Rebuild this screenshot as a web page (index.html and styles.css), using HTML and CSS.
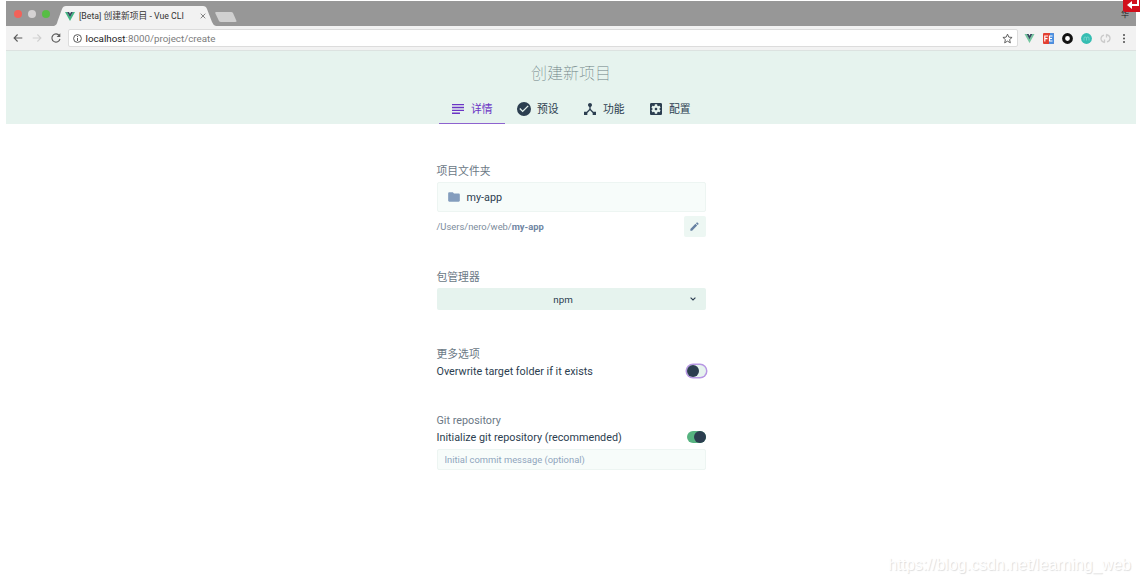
FILE: index.html
```
<!DOCTYPE html>
<html lang="zh-CN">
<head>
    <meta charset="UTF-8">
    <meta name="viewport" content="width=device-width, initial-scale=1.0">
    <title>[Beta] 创建新项目 - Vue CLI</title>
    <link rel="stylesheet" href="styles.css">
</head>
<body>
    <div class="window">
        <div class="tab-bar">
            <div class="lights">
                <span class="light red"></span>
                <span class="light grey"></span>
                <span class="light green"></span>
            </div>
            <div class="tab">
                <svg class="tab-shape" width="162" height="20" viewBox="0 0 162 20"><path d="M0 20C3 19 3 17 4 14L8 3Q9 0 12 0H149Q152 0 153 3L158 16Q159 19 162 20Z" fill="#f2f2f2"/></svg>
                <svg class="vue" width="10" height="9" viewBox="0 0 10 9"><path d="M0 0H2L5 5L8 0H10L5 9Z" fill="#41b883"/><path d="M2 0H4L5 1.8L6 0H8L5 5.2Z" fill="#35495e"/></svg>
                <span class="tab-title">[Beta] 创建新项目 - Vue CLI</span>
                <svg class="tab-close" width="6" height="6" viewBox="0 0 6 6"><path d="M.7 .7L5.3 5.3M5.3 .7L.7 5.3" stroke="#777" stroke-width=".9"/></svg>
            </div>
            <svg class="new-tab" width="22" height="10" viewBox="0 0 22 10"><path d="M1 0H16Q17.500 0 18 1L21.500 9Q22 10 20 10H6Q4.500 10 4 9L.3 1.200Q0 0 1 0Z" fill="#d0d0d0"/></svg>
            <span class="profile">华</span>
        </div>

        <div class="toolbar">
            <svg class="nav" width="12" height="12" viewBox="0 0 12 12"><path d="M10.300 6H2.200M5.600 2.500L2.100 6L5.600 9.500" fill="none" stroke="#5a5a5a" stroke-width="1.100"/></svg>
            <svg class="nav" width="12" height="12" viewBox="0 0 12 12"><path d="M1.700 6H9.800M6.400 2.500L9.900 6L6.400 9.500" fill="none" stroke="#cfcfcf" stroke-width="1.100"/></svg>
            <svg class="nav" width="12" height="12" viewBox="0 0 12 12"><path d="M9.300 3.500A4.100 4.100 0 1 0 10 7" fill="none" stroke="#5a5a5a" stroke-width="1.100"/><path d="M10.300 1.300V5H6.600Z" fill="#5a5a5a"/></svg>
            <div class="address">
                <svg width="9" height="9" viewBox="0 0 9 9"><circle cx="4.500" cy="4.500" r="3.900" fill="none" stroke="#5a5a5a"/><path d="M4.500 4V7M4.500 2V3.100" stroke="#5a5a5a"/></svg>
                <span class="url"><span class="host">localhost</span>:8000/project/create</span>
                <svg class="star" width="11" height="11" viewBox="0 0 24 24"><path d="M12 2.500L14.900 9L22 9.700L16.600 14.400L18.200 21.500L12 17.700L5.800 21.500L7.400 14.400L2 9.700L9.100 9Z" fill="none" stroke="#555" stroke-width="2"/></svg>
            </div>
            <div class="extensions">
                <svg width="11" height="11" viewBox="0 0 11 11"><path d="M.5 1H2.600L5.500 6L8.400 1H10.500L5.500 10Z" fill="#74c7a0"/><path d="M2.600 1H4.600L5.500 2.700L6.400 1H8.400L5.500 6.200Z" fill="#35495e"/></svg>
                <svg width="11" height="11" viewBox="0 0 11 11"><rect width="11" height="11" rx="1" fill="#e33f31"/><path d="M7 0H10Q11 0 11 1V10Q11 11 10 11H6Z" fill="#4b8fe0"/><path d="M1.800 8.500V3H5M2 5.700H4.500M9.500 3H6.500V8H9.500M6.500 5.500H9" fill="none" stroke="#fff" stroke-width="1.200"/></svg>
                <svg width="11" height="11" viewBox="0 0 11 11"><circle cx="5.500" cy="5.500" r="3.900" fill="#fff" stroke="#111" stroke-width="3"/></svg>
                <svg width="11" height="11" viewBox="0 0 11 11"><circle cx="5.500" cy="5.500" r="5.400" fill="#35bdb2"/><path d="M3 7.500V5Q3 4 4.200 4Q5.500 4 5.500 5V7.500M5.500 5Q5.500 4 6.800 4Q8 4 8 5V7.500" fill="none" stroke="#80d8d0" stroke-width=".8"/></svg>
                <svg width="11" height="11" viewBox="0 0 11 11"><path d="M4.800 9.500Q.8 8.500 1 5.500Q1.200 2.700 4 2.200M6.200 1.500Q10.200 2.500 10 5.500Q9.800 8.300 7 8.800M4.500 6.500V9.500M6.500 4.500V1.500" fill="none" stroke="#cacaca" stroke-width="1.300"/></svg>
                <svg class="more" width="11" height="11" viewBox="0 0 11 11"><g fill="#4c4c4c"><circle cx="5" cy="2" r="1"/><circle cx="5" cy="5.500" r="1"/><circle cx="5" cy="9" r="1"/></g></svg>
            </div>
        </div>

        <div class="header">
            <h1>创建新项目</h1>
            <div class="steps">
                <div class="step active">
                    <svg width="16" height="16" viewBox="0 0 24 24"><path d="M3 4.500H21V6.500H3ZM3 8.800H21V10.800H3ZM3 13.100H21V15.100H3ZM3 17.400H15V19.400H3Z"/></svg>
                    <span>详情</span>
                </div>
                <div class="step">
                    <svg width="16" height="16" viewBox="0 0 24 24"><path d="M12 1.500a10.500 10.500 0 1 0 0 21a10.500 10.500 0 0 0 0-21zM10 17l-5-5 1.410-1.410L10 14.170l7.590-7.590L19 8z"/></svg>
                    <span>预设</span>
                </div>
                <div class="step">
                    <svg width="16" height="16" viewBox="0 0 24 24"><path d="M17 16l-4-4V8.820C14.160 8.400 15 7.300 15 6c0-1.660-1.340-3-3-3S9 4.340 9 6c0 1.300.84 2.400 2 2.820V12l-4 4H3v5h5v-3.050l4-4.200 4 4.200V21h5v-5h-4z"/></svg>
                    <span>功能</span>
                </div>
                <div class="step">
                    <svg width="16" height="16" viewBox="0 0 24 24"><path d="M12 10c-1.100 0-2 .9-2 2s.9 2 2 2 2-.9 2-2-.9-2-2-2zm7-7H5c-1.110 0-2 .9-2 2v14c0 1.100.89 2 2 2h14c1.110 0 2-.9 2-2V5c0-1.100-.89-2-2-2zm-1.750 9c0 .23-.02.46-.05.68l1.480 1.160c.13.110.17.3.08.45l-1.400 2.420c-.09.150-.27.210-.43.150l-1.740-.7c-.36.280-.76.510-1.180.69l-.26 1.850c-.03.170-.18.300-.35.300h-2.800c-.17 0-.32-.13-.35-.29l-.26-1.850c-.43-.18-.82-.41-1.180-.69l-1.740.7c-.16.060-.34 0-.43-.15l-1.400-2.420c-.09-.15-.05-.34.08-.45l1.480-1.160c-.03-.23-.05-.46-.05-.69 0-.23.02-.46.05-.68l-1.480-1.160c-.13-.11-.17-.3-.08-.45l1.400-2.420c.09-.15.27-.21.430-.15l1.740.7c.36-.28.76-.51 1.180-.69l.26-1.850c.03-.17.18-.3.350-.3h2.800c.17 0 .32.130.350.290l.26 1.850c.43.180.82.410 1.180.690l1.740-.7c.16-.06.34 0 .43.150l1.400 2.420c.09.150.05.340-.08.450l-1.480 1.160c.03.230.05.460.05.690z"/></svg>
                    <span>配置</span>
                </div>
            </div>
        </div>

        <div class="form">
            <div class="group folder-group">
                <div class="label">项目文件夹</div>
                <div class="folder">
                    <svg width="14" height="14" viewBox="0 0 24 24"><path d="M10 4H4c-1.100 0-2 .9-2 2v12c0 1.100.9 2 2 2h16c1.100 0 2-.9 2-2V8c0-1.100-.9-2-2-2h-8l-2-2z"/></svg>
                    <span>my-app</span>
                </div>
                <div class="path-row">
                    <span class="path">/Users/nero/web/<b>my-app</b></span>
                    <button class="edit" type="button">
                        <svg width="11" height="11" viewBox="0 0 24 24"><path d="M3 17.250V21h3.750L17.810 9.940l-3.750-3.750L3 17.250zM20.710 7.040a1 1 0 0 0 0-1.410l-2.340-2.340a1 1 0 0 0-1.410 0l-1.830 1.830 3.750 3.750 1.830-1.830z"/></svg>
                    </button>
                </div>
            </div>

            <div class="group manager-group">
                <div class="label">包管理器</div>
                <div class="select">
                    <span>npm</span>
                    <svg width="6" height="4" viewBox="0 0 6 4"><path d="M.6 .6L3 2.900L5.400 .6" fill="none" stroke="#2c3e50" stroke-width="1.100"/></svg>
                </div>
            </div>

            <div class="group options-group">
                <div class="label">更多选项</div>
                <div class="switch-row">
                    <span>Overwrite target folder if it exists</span>
                    <span class="switch focused"></span>
                </div>
            </div>

            <div class="group git-group">
                <div class="label">Git repository</div>
                <div class="switch-row">
                    <span>Initialize git repository (recommended)</span>
                    <span class="switch on"></span>
                </div>
                <input class="commit" type="text" placeholder="Initial commit message (optional)">
            </div>
        </div>
    </div>

    <div class="corner">
        <svg width="17" height="12" viewBox="0 0 17 12"><path d="M15 0V5H7" fill="none" stroke="#fff" stroke-width="2"/><path d="M4 5L9 1V9Z" fill="#fff"/></svg>
    </div>
    <div class="watermark">https://blog.csdn.net/learning_web</div>
</body>
</html>
```
FILE: styles.css
```
* {
    box-sizing: border-box;
}

body {
    margin: 0;
    height: 583px;
    overflow: hidden;
    background: #fff;
    color: #2c3e50;
    font-family: Roboto, "Noto Sans CJK SC", sans-serif;
    font-size: 10.8px;
}

svg {
    display: block;
    flex-shrink: 0;
}

.window {
    margin: 1px 4px 0 6px;
}

/* browser chrome */
.tab-bar {
    display: flex;
    height: 25px;
    background: #979797;
}

.lights {
    display: flex;
    gap: 6px;
    padding: 9px 0 0 8px;
}

.light {
    width: 8px;
    height: 8px;
    border-radius: 50%;
}

.light.red {
    background: #f2625a;
}

.light.grey {
    background: #d5d2d3;
}

.light.green {
    background: #57bd45;
}

.tab {
    position: relative;
    display: flex;
    align-items: center;
    width: 162px;
    height: 20px;
    margin: 5px 0 0 4px;
    padding-left: 11px;
}

.tab-shape {
    position: absolute;
    left: 0;
    top: 0;
}

.vue,
.tab-title,
.tab-close {
    position: relative;
}

.tab-title {
    width: 116px;
    margin-left: 4px;
    color: #333;
    font-size: 8.75px;
    line-height: 20px;
    white-space: nowrap;
}

.tab-close {
    margin-left: 5px;
}

.new-tab {
    margin-top: 11px;
    margin-left: -1px;
}

.profile {
    margin: 8px 7px 0 auto;
    color: #222;
    font-size: 8px;
    line-height: 12px;
}

.toolbar {
    display: flex;
    align-items: center;
    height: 25px;
    padding: 0 6px;
    background: #f2f2f2;
    border-bottom: 1px solid #dce2e0;
}

.nav {
    margin-right: 7px;
}

.address {
    display: flex;
    align-items: center;
    width: 950px;
    height: 18px;
    margin-left: -1px;
    padding: 0 4px;
    background: #fff;
    border: 1px solid #dcdcdc;
    border-radius: 2px;
}

.url {
    margin-left: 3.5px;
    color: #7c7c7c;
    font-size: 9.8px;
}

.host {
    color: #222;
}

.star {
    margin-left: auto;
}

.extensions {
    display: flex;
    gap: 8px;
    margin-left: 6px;
}

/* project header */
.header {
    height: 73px;
    background: #e6f3ee;
}

.header h1 {
    margin: 0;
    padding-top: 9px;
    color: #6c7f82;
    font-size: 16px;
    font-weight: 100;
    line-height: 28px;
    text-align: center;
}

.steps {
    display: flex;
    justify-content: center;
    margin-top: 6px;
}

.step {
    display: flex;
    align-items: center;
    gap: 5px;
    width: 66px;
    height: 30px;
    padding-left: 11px;
    border-bottom: 1px solid transparent;
    white-space: nowrap;
}

.step span {
    padding-bottom: 1px;
}

.step svg {
    fill: #2c3e50;
}

.step.active {
    color: #6b35c5;
    border-bottom-color: #8d63cf;
}

.step.active svg {
    fill: #6b35c5;
}

/* details form */
.form {
    width: 269px;
    margin: 39px 0 0 430.5px;
}

.label {
    height: 18px;
    color: #6b7885;
    line-height: 18px;
}

.folder-group {
    height: 106px;
}

.folder {
    display: flex;
    align-items: center;
    gap: 6px;
    height: 30px;
    margin-top: 1px;
    padding-left: 9px;
    background: #f7fcfa;
    border: 1px solid #edf5f2;
    border-radius: 2px;
}

.folder svg {
    fill: #849dbd;
}

.path-row {
    display: flex;
    align-items: center;
    justify-content: space-between;
    margin-top: 4px;
    color: #7b8b9b;
    font-size: 9.4px;
}

.path b {
    color: #6f86a3;
}

.edit {
    display: flex;
    align-items: center;
    justify-content: center;
    width: 22px;
    height: 21px;
    padding: 0;
    background: #edf7f3;
    border: none;
    border-radius: 2px;
}

.edit svg {
    fill: #6681a2;
}

.manager-group {
    height: 77px;
}

.select {
    display: flex;
    align-items: center;
    height: 22px;
    margin-top: 1px;
    padding-right: 10px;
    background: #e6f3ee;
    border-radius: 2px;
    font-size: 9.8px;
}

.select span {
    flex: 1;
    text-align: center;
}

.options-group {
    height: 66px;
}

.switch-row {
    display: flex;
    align-items: center;
    justify-content: space-between;
    height: 16px;
    margin-top: -1px;
}

.switch {
    display: flex;
    width: 19px;
    height: 12px;
    border-radius: 6px;
    background: #e6f3ee;
}

.switch::before {
    content: "";
    width: 12px;
    height: 12px;
    border-radius: 50%;
    background: #2c3e50;
}

.switch.focused {
    box-shadow: 0 0 0 1.5px #b797e3;
}

.switch.on {
    justify-content: flex-end;
    background: #56b380;
}

.commit {
    display: block;
    width: 100%;
    height: 21px;
    margin-top: 4px;
    padding: 0 7px;
    background: #f7fcfa;
    border: 1px solid #edf5f2;
    border-radius: 2px;
    font-family: inherit;
    font-size: 9.4px;
}

.commit::placeholder {
    color: #8fa5bd;
}

/* overlays */
.corner {
    position: absolute;
    top: 0;
    right: 0;
    background: #d10f1b;
    border-bottom-left-radius: 2px;
}

.watermark {
    position: absolute;
    right: 9px;
    bottom: 9px;
    color: #fff;
    font-family: "Liberation Sans", sans-serif;
    font-size: 16px;
    line-height: 18px;
    text-shadow: 1px 1px 1px #ddd;
}
```
